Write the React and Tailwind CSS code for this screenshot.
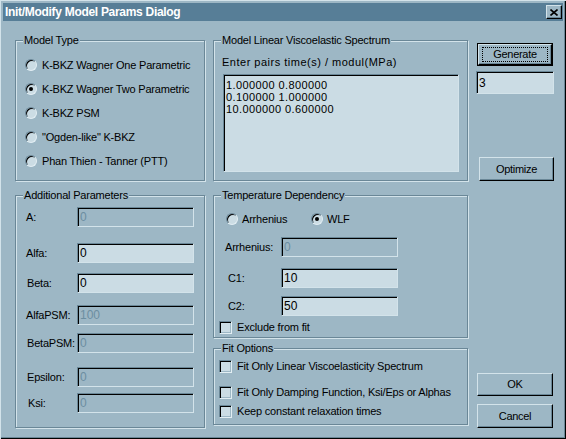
import React from 'react';

const bg = 'bg-[#9db7c5]';

function GroupBox({ label, className, children }) {
  return (
    <div
      className={`relative border border-[#6a8797] shadow-[inset_1px_1px_0_#d3e3ea,1px_1px_0_#d3e3ea] ${className}`}
    >
      <span className={`absolute -top-[8px] left-[7px] px-[1px] leading-[14px] ${bg}`}>{label}</span>
      {children}
    </div>
  );
}

function Radio({ checked }) {
  return (
    <span className="relative w-[12px] h-[12px] shrink-0 rounded-full bg-[#cbdce4] border border-t-[#6a8797] border-l-[#6a8797] border-b-[#e2eef3] border-r-[#e2eef3] shadow-[inset_1px_1px_0_#000]">
      {checked && (
        <span className="absolute left-[3px] top-[3px] w-[4px] h-[4px] rounded-full bg-black" />
      )}
    </span>
  );
}

function Checkbox() {
  return (
    <span className="w-[13px] h-[13px] shrink-0 bg-[#cbdce4] border border-t-[#6a8797] border-l-[#6a8797] border-b-[#e2eef3] border-r-[#e2eef3] shadow-[inset_1px_1px_0_#000,inset_-1px_-1px_0_#9db7c5]" />
  );
}

function Field({ value, disabled, className = '' }) {
  return (
    <div
      className={`h-[20px] w-[117px] flex items-center pl-[2px] text-[12px] tracking-normal border border-t-[#6a8797] border-l-[#6a8797] border-b-[#d3e3ea] border-r-[#d3e3ea] shadow-[inset_1px_1px_0_#000] ${
        disabled ? 'bg-[#9db7c5] text-[#6c8ea1]' : 'bg-[#cbdce4] text-black'
      } ${className}`}
    >
      {value}
    </div>
  );
}

function Button({ children, className = '' }) {
  return (
    <div
      className={`flex items-center justify-center tracking-[-0.3px] border border-t-[#d3e3ea] border-l-[#d3e3ea] border-b-black border-r-black shadow-[inset_-1px_-1px_0_#6a8797] ${className}`}
    >
      {children}
    </div>
  );
}

const models = [
  { label: 'K-BKZ Wagner One Parametric', checked: false },
  { label: 'K-BKZ Wagner Two Parametric', checked: true },
  { label: 'K-BKZ PSM', checked: false },
  { label: '"Ogden-like" K-BKZ', checked: false },
  { label: 'Phan Thien - Tanner (PTT)', checked: false },
];

const params = [
  { label: 'A:', value: '0', disabled: true, mt: 'mt-[11px]', pl: 'pl-0' },
  { label: 'Alfa:', value: '0', disabled: false, mt: 'mt-[16px]', pl: 'pl-0' },
  { label: 'Beta:', value: '0', disabled: false, mt: 'mt-[10px]', pl: 'pl-[1px]' },
  { label: 'AlfaPSM:', value: '100', disabled: true, mt: 'mt-[12px]', pl: 'pl-0' },
  { label: 'BetaPSM:', value: '0', disabled: true, mt: 'mt-[8px]', pl: 'pl-[1px]' },
  { label: 'Epsilon:', value: '0', disabled: true, mt: 'mt-[14px]', pl: 'pl-[1px]' },
  { label: 'Ksi:', value: '0', disabled: true, mt: 'mt-[6px]', pl: 'pl-[2px]' },
];

export default function App() {
  return (
    <div
      className={`w-[566px] h-[439px] ${bg} text-black text-[11px] tracking-[-0.2px] whitespace-nowrap font-['Liberation_Sans',Arial,sans-serif] shadow-[inset_1px_1px_0_#d3e3ea,inset_-1px_-1px_0_#000,inset_-2px_-2px_0_#6a8797] pt-[3px] px-[3px] overflow-hidden`}
    >
      {/* title bar */}
      <div className="h-[18px] bg-[#577e97] flex items-center justify-between pl-[2px] pr-[1px]">
        <span className="text-white font-bold text-[12px] tracking-[-0.3px]">Init/Modify Model Params Dialog</span>
        <Button className={`w-[16px] h-[14px] ${bg}`}>
          <svg width="8" height="7" viewBox="0 0 8 7">
            <path d="M0.5 0.5 L7.5 6.5 M7.5 0.5 L0.5 6.5" stroke="#000" strokeWidth="1.6" />
          </svg>
        </Button>
      </div>

      <div className="flex pl-[12px] pt-[19px]">
        {/* left column */}
        <div className="w-[190px] flex flex-col">
          <GroupBox label="Model Type" className="h-[141px]">
            <div className="flex flex-col gap-[8px] pt-[16px] pl-[9px]">
              {models.map((m) => (
                <div key={m.label} className="h-[16px] flex items-center gap-[5px]">
                  <Radio checked={m.checked} />
                  <span>{m.label}</span>
                </div>
              ))}
            </div>
          </GroupBox>

          <GroupBox label="Additional Parameters" className="h-[233px] mt-[14px]">
            <div className="flex flex-col pl-[10px]">
              {params.map((p) => (
                <div key={p.label} className={`flex items-center h-[20px] ${p.mt}`}>
                  <span className={`w-[51px] ${p.pl}`}>{p.label}</span>
                  <Field value={p.value} disabled={p.disabled} />
                </div>
              ))}
            </div>
          </GroupBox>
        </div>

        {/* middle column */}
        <div className="w-[255px] ml-[8px] flex flex-col">
          <GroupBox label="Model Linear Viscoelastic Spectrum" className="h-[141px]">
            <div className="pl-[8px] pt-[14px] leading-[14px] tracking-[0.5px]">Enter pairs time(s) / modul(MPa)</div>
            <div className="ml-[9px] mt-[5px] w-[236px] h-[98px] bg-[#cbdce4] text-[11px] tracking-[0.4px] border border-t-[#6a8797] border-l-[#6a8797] border-b-[#d3e3ea] border-r-[#d3e3ea] shadow-[inset_1px_1px_0_#000] pl-[2px] pt-[4px] leading-[12px]">
              <div>1.000000 0.800000</div>
              <div>0.100000 1.000000</div>
              <div>10.000000 0.600000</div>
            </div>
          </GroupBox>

          <GroupBox label="Temperature Dependency" className="h-[143px] mt-[14px]">
            <div className="flex items-center h-[16px] mt-[15px] pl-[12px]">
              <div className="w-[85px] flex items-center gap-[4px]">
                <Radio checked={false} />
                <span>Arrhenius</span>
              </div>
              <div className="flex items-center gap-[4px]">
                <Radio checked />
                <span>WLF</span>
              </div>
            </div>
            <div className="flex items-center h-[20px] mt-[10px] pl-[11px]">
              <span className="w-[56px]">Arrhenius:</span>
              <Field value="0" disabled />
            </div>
            <div className="flex items-center h-[20px] mt-[11px] pl-[11px]">
              <span className="w-[56px] pl-[3px]">C1:</span>
              <Field value="10" />
            </div>
            <div className="flex items-center h-[20px] mt-[8px] pl-[11px]">
              <span className="w-[56px] pl-[3px]">C2:</span>
              <Field value="50" />
            </div>
            <div className="flex items-center gap-[5px] h-[13px] mt-[5px] pl-[5px]">
              <Checkbox />
              <span>Exclude from fit</span>
            </div>
          </GroupBox>

          <GroupBox label="Fit Options" className="h-[77px] mt-[10px]">
            <div className="flex items-center gap-[5px] h-[13px] mt-[11px] pl-[5px]">
              <Checkbox />
              <span>Fit Only Linear Viscoelasticity Spectrum</span>
            </div>
            <div className="flex items-center gap-[5px] h-[13px] mt-[13px] pl-[5px]">
              <Checkbox />
              <span>Fit Only Damping Function, Ksi/Eps or Alphas</span>
            </div>
            <div className="flex items-center gap-[5px] h-[13px] mt-[6px] pl-[5px]">
              <Checkbox />
              <span>Keep constant relaxation times</span>
            </div>
          </GroupBox>
        </div>

        {/* right column */}
        <div className="w-[78px] ml-[9px] flex flex-col">
          <div className="mt-[3px] w-[76px] h-[23px] border border-black">
            <Button className="w-full h-full">
              <span className="border border-dotted border-black w-[66px] h-[15px] flex items-center justify-center">
                Generate
              </span>
            </Button>
          </div>
          <div className="mt-[5px] -ml-[1px] w-[78px] h-[23px] flex items-center pl-[2px] text-[12px] tracking-normal bg-[#cbdce4] border border-t-[#6a8797] border-l-[#6a8797] border-b-[#d3e3ea] border-r-[#d3e3ea] shadow-[inset_1px_1px_0_#000]">
            3
          </div>
          <Button className="mt-[63px] ml-[2px] w-[75px] h-[24px]">Optimize</Button>
          <Button className="mt-[192px] w-[76px] h-[23px]">OK</Button>
          <Button className="mt-[8px] w-[76px] h-[24px]">Cancel</Button>
        </div>
      </div>
    </div>
  );
}
